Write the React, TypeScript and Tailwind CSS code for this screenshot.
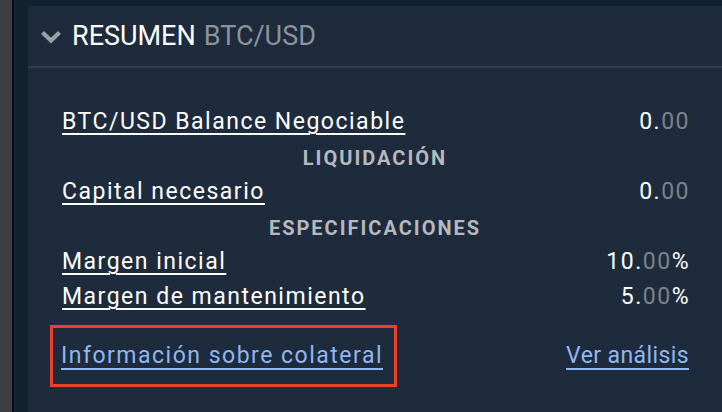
import React from "react";

const Val = ({ a, b, pct }: { a: string; b: string; pct?: boolean }) => (
  <span className="-mr-[2px] text-white">
    {a}.<span className="text-[#7c828b]">{b}</span>
    {pct ? "%" : ""}
  </span>
);

const Row = ({ label, children }: { label: string; children: React.ReactNode }) => (
  <div className="flex h-[35px] items-center justify-between">
    <span className="text-white underline decoration-2 underline-offset-[4px]">{label}</span>
    {children}
  </div>
);

const Section = ({ title }: { title: string }) => (
  <div className="flex h-[35px] items-center justify-center text-[20px] font-bold tracking-[2px] text-[#b6b9be]">
    {title}
  </div>
);

export default function App() {
  return (
    <div
      className="flex h-[412px] w-[722px] overflow-hidden"
      style={{ fontFamily: "Roboto, 'Noto Sans', sans-serif" }}
    >
      <div className="w-[12px] bg-[#3c3e43]" />
      <div className="w-[2px] bg-[#0b0d10]" />
      <div className="flex flex-1 flex-col bg-[#132230] pl-[14px] pt-[6px]">
        <div className="flex flex-1 flex-col bg-[#1e2b3c]">
          <div className="flex h-[62px] items-center border-b-2 border-[#333f4d] pl-[12px]">
            <svg width="22" height="14" viewBox="0 0 22 14" className="mt-[2px]">
              <path d="M2.5 2.5 L11 10.5 L19.5 2.5" fill="none" stroke="#9aa0a7" strokeWidth="4.2" />
            </svg>
            <span className="ml-[10px] text-[27px] text-white">RESUMEN</span>
            <span className="ml-[8px] text-[27px] text-[#8c939c]">BTC/USD</span>
          </div>
          <div className="flex flex-col px-[34px] pt-[37px] text-[23px] tracking-[1.5px]">
            <Row label="BTC/USD Balance Negociable">
              <Val a="0" b="00" />
            </Row>
            <Section title="LIQUIDACIÓN" />
            <Row label="Capital necesario">
              <Val a="0" b="00" />
            </Row>
            <Section title="ESPECIFICACIONES" />
            <Row label="Margen inicial">
              <Val a="10" b="00" pct />
            </Row>
            <Row label="Margen de mantenimiento">
              <Val a="5" b="00" pct />
            </Row>
            <div className="mt-[10px] flex items-center justify-between">
              <div className="-ml-[12px] flex h-[62px] items-center border-[3px] border-[#e8402a] pl-[8px] pr-[11px]">
                <span className="text-[#8fb8f0] underline decoration-2 underline-offset-[5px]">
                  Información sobre colateral
                </span>
              </div>
              <span className="-mr-[1px] tracking-[0.4px] text-[#8fb8f0] underline decoration-2 underline-offset-[5px]">
                Ver análisis
              </span>
            </div>
          </div>
        </div>
      </div>
    </div>
  );
}
